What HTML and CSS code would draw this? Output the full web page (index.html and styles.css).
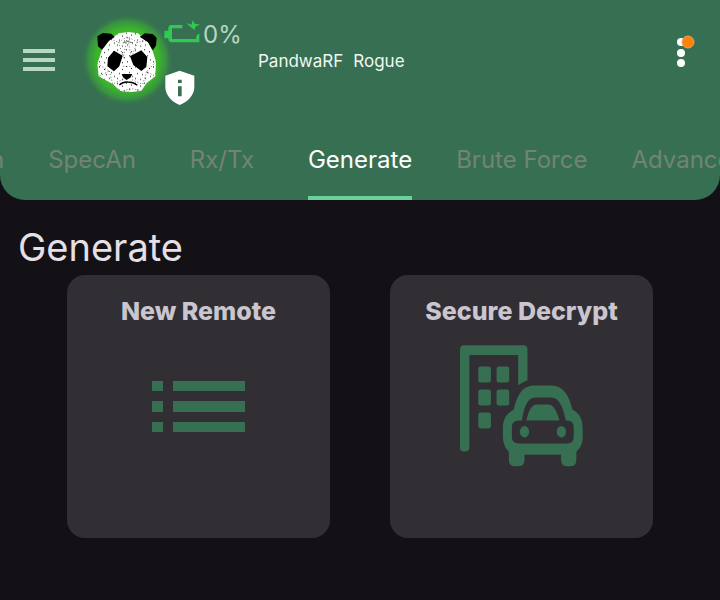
FILE: index.html
```html
<!DOCTYPE html>
<html lang="en">
<head>
    <meta charset="UTF-8">
    <meta name="viewport" content="width=device-width, initial-scale=1.0">
    <title>PandwaRF Rogue - Generate</title>
    <link rel="stylesheet" href="styles.css">
</head>
<body>

    <header class="header">
        <div class="toolbar">
            <button class="menu-button" type="button" aria-label="Menu">
                <svg width="32" height="22" viewBox="0 0 32 22"><path d="M0 0h32v4H0zM0 9h32v4H0zM0 18h32v4H0z" fill="#b9d6c5"/></svg>
            </button>

            <!-- Panda logo -->
            <svg class="logo" width="84" height="90" viewBox="0 0 252 270">
                <defs>
                    <radialGradient id="glow">
                        <stop offset="0" stop-color="#3fc024"/>
                        <stop offset="0.68" stop-color="#3cb42b"/>
                        <stop offset="0.85" stop-color="#399a3e" stop-opacity="0.8"/>
                        <stop offset="1" stop-color="#376f52" stop-opacity="0"/>
                    </radialGradient>
                    <pattern id="specks" width="54" height="50" patternUnits="userSpaceOnUse">
                        <path d="M3 4h3v3H3zM18 12h3v3h-3zM30 3h3v3h-3zM45 9h3v3h-3zM9 24h3v3H9zM24 27h3v3h-3zM39 21h3v3h-3zM48 33h3v3h-3zM3 39h3v3H3zM18 42h3v3h-3zM33 39h3v3h-3z" fill="#111"/>
                    </pattern>
                </defs>
                <circle cx="142" cy="135" r="138" fill="url(#glow)"/>
                <path d="M92 72 116 55 145 51 174 55 202 76 218 108 228 140 226 184 200 204 184 227 156 231 122 229 98 207 56 184 52 146 66 104z" fill="#fff"/>
                <path d="M92 72 116 55 145 51 174 55 202 76 218 108 228 140 226 184 200 204 184 227 156 231 122 229 98 207 56 184 52 146 66 104z" fill="url(#specks)"/>
                <path d="M92 72 116 82 142 64 172 82 202 76M116 82 130 128 142 64 154 128 172 82M52 146 88 168 56 184M88 168 98 207 132 192M228 140 200 170 226 184M200 170 188 208 150 192M130 154h28M122 229l34-8 28 6" fill="none" stroke="#222" stroke-width="2" stroke-dasharray="3 6"/>
                <path d="M52 64 68 54 94 56 104 66 86 78 66 104 54 94zM180 66 194 55 218 57 230 68 228 92 218 106 204 82z" fill="#000"/>
                <path d="M84 128 102 107 128 122 118 154 102 169 82 154zM150 124 184 106 202 126 199 156 184 168 160 150z" fill="#000"/>
                <path d="M125 177h32l-6 11-12 7-10-8z" fill="#000"/>
                <path d="M118 210q10-10 26-9 15 0 28 10" fill="none" stroke="#000" stroke-width="4"/>
                <path d="M128 84q16-9 30 0" fill="none" stroke="#222" stroke-width="2"/>
            </svg>

            <!-- Battery and device info -->
            <div class="status">
                <div class="battery">
                    <svg width="36" height="28" viewBox="0 0 108 84">
                        <path d="M55 27H19l-6 6v11H1v23h12v6l6 6h87V52l-9 7v10H24V37h31z" fill="#2fca51"/>
                        <path d="M66 21 83 26 86 12 93 24 108 25 94 32 92 42 79 32z" fill="#2fca51"/>
                    </svg>
                    <span>0%</span>
                </div>
                <button class="info-button" type="button" aria-label="Device info">
                    <svg width="32" height="36" viewBox="0 0 96 108">
                        <path fill-rule="evenodd" d="M47 2 91 17V52C91 76 69 98 47 105 26 98 4 76 4 52V17zM42 29v10h11V29zM42 49v30h11V49z" fill="#fff"/>
                    </svg>
                </button>
            </div>

            <div class="device"><span>PandwaRF</span><span>Rogue</span></div>

            <button class="more-button" type="button" aria-label="More options">
                <svg width="24" height="36" viewBox="0 0 24 36">
                    <circle cx="10" cy="9" r="4" fill="#fff"/>
                    <circle cx="10" cy="20" r="4" fill="#fff"/>
                    <circle cx="10" cy="30" r="4" fill="#fff"/>
                    <circle cx="17" cy="9" r="6" fill="#ff8208" stroke="#e8a368" stroke-width="1"/>
                </svg>
            </button>
        </div>

        <nav class="tabs">
            <a href="#connection"><span>Connection</span></a>
            <a href="#specan"><span>SpecAn</span></a>
            <a href="#rxtx"><span>Rx/Tx</span></a>
            <a href="#generate" class="active"><span>Generate</span></a>
            <a href="#bruteforce"><span>Brute Force</span></a>
            <a href="#advanced"><span>Advanced</span></a>
        </nav>
    </header>

    <main>
        <h1>Generate</h1>
        <div class="cards">
            <button class="card" type="button">
                <span class="card-title">New Remote</span>
                <svg width="123" height="122" viewBox="0 0 123 122">
                    <path d="M15 36h11v10H15zM36 36h72v10H36zM15 56h11v11H15zM36 56h72v11H36zM15 77h11v10H15zM36 77h72v10H36z" fill="#376f52"/>
                </svg>
            </button>
            <button class="card" type="button">
                <span class="card-title">Secure Decrypt</span>
                <svg width="123" height="122" viewBox="60 45 370 363">
                    <g fill="#376f52">
                        <path d="M60 57q0-13 13-13h178q12 0 12 13v92q-15 5-28 15V73H88v279q0 11-11 11h-6q-11 0-11-11z"/>
                        <rect x="115" y="108" width="38" height="48" rx="7"/>
                        <rect x="170" y="108" width="38" height="48" rx="7"/>
                        <rect x="115" y="177" width="38" height="48" rx="7"/>
                        <rect x="170" y="177" width="38" height="48" rx="7"/>
                        <rect x="115" y="246" width="38" height="48" rx="7"/>
                        <path fill-rule="evenodd" d="M284 165h50c36 0 54 28 64 72 22 12 31 30 31 56v28c0 18-7 32-19 43v24q0 20-20 20h-6q-20 0-20-20v-15H254v15q0 20-20 20h-7q-20 0-20-20v-24c-12-12-18-26-18-44v-27c0-27 11-45 33-56 10-44 26-72 62-72zM286 201c-23 0-33 29-40 69h-10q-20 0-20 20v29q0 20 20 20h146q20 0 20-20v-29q0-20-20-20h-4c-8-42-21-69-44-69z"/>
                        <path d="M260 270q9-48 32-48h34q20 0 33 48z"/>
                        <ellipse cx="254" cy="304" rx="14" ry="17"/>
                        <ellipse cx="365" cy="304" rx="14" ry="17"/>
                    </g>
                </svg>
            </button>
        </div>
    </main>

    <script>
        // Keep the selected tab in the middle of the strip
        const tabs = document.querySelector('.tabs');
        const active = tabs.querySelector('.active');
        tabs.scrollLeft = active.offsetLeft - (tabs.clientWidth - active.offsetWidth) / 2;
    </script>

</body>
</html>
```
FILE: styles.css
```css
body {
    font-family: Inter, "Open Sans", sans-serif;
    background-color: #131116;
    color: #e5e0e8;
    margin: 0;
}
button {
    padding: 0;
    border: none;
    background: none;
    font-family: inherit;
    cursor: pointer;
}
svg {
    display: block;
    flex: none;
}
.header {
    background-color: #376f52;
    border-radius: 0 0 25px 25px;
    overflow: hidden;
}
.toolbar {
    display: flex;
    align-items: center;
    height: 120px;
    padding: 0 25px 0 23px;
}
.menu-button {
    margin-right: 25px;
}
.logo {
    overflow: visible;
}
.status {
    display: flex;
    flex-direction: column;
    gap: 26px;
    width: 94px;
    height: 88px;
    z-index: 1;
}
.battery {
    display: flex;
    height: 28px;
    gap: 3px;
    color: #b9d6c5;
    font-size: 24px;
    line-height: 38px;
}
.info-button {
    align-self: flex-start;
}
.device {
    display: flex;
    gap: 10px;
    flex: 1;
    padding-top: 2px;
    color: #f1f7f3;
    font-size: 17px;
    line-height: 24px;
}
.more-button {
    margin-bottom: 18px;
}
.tabs {
    display: flex;
    position: relative;
    overflow: hidden;
}
.tabs a {
    display: flex;
    flex: none;
    justify-content: center;
    min-width: 84px;
    padding: 0 22px;
    color: #748377;
    font-size: 24px;
    line-height: 80px;
    text-decoration: none;
}
.tabs span {
    height: 76px;
    border-bottom: 4px solid transparent;
}
.tabs .active {
    color: #fff;
}
.tabs .active span {
    border-color: #69d19c;
}
h1 {
    margin: 0;
    padding: 23px 18px 4px;
    font-size: 38px;
    font-weight: 400;
    line-height: 48px;
}
.cards {
    display: grid;
    grid-template-columns: 1fr 1fr;
    gap: 60px;
    padding: 0 67px;
}
.card {
    display: flex;
    flex-direction: column;
    align-items: center;
    justify-content: flex-start;
    gap: 18px;
    aspect-ratio: 1;
    padding-top: 20px;
    border-radius: 18px;
    background-color: #312f33;
}
.card-title {
    color: #cac5cf;
    font-size: 25px;
    font-weight: 800;
    line-height: 32px;
}
```
